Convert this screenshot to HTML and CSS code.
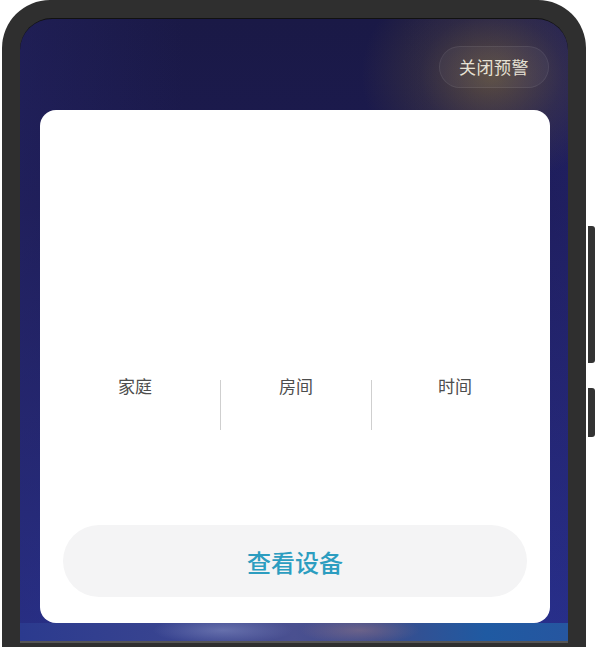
FILE: index.html
```html
<!DOCTYPE html>
<html lang="zh-CN">
<head>
<meta charset="utf-8">
<title>关闭预警</title>
<link rel="stylesheet" href="styles.css">
</head>
<body>
<div class="device">
  <div class="phone">
    <div class="screen">
      <div class="topbar">
        <div class="pill">关闭预警</div>
      </div>
      <div class="card">
        <div class="blank"></div>
        <div class="info">
          <div class="col col-a"><span class="label">家庭</span></div>
          <div class="divider"></div>
          <div class="col col-b"><span class="label">房间</span></div>
          <div class="divider"></div>
          <div class="col col-c"><span class="label">时间</span></div>
        </div>
        <div class="btn">查看设备</div>
      </div>
      <div class="glow-strip"></div>
    </div>
  </div>
  <div class="side-keys">
    <div class="key key-long"></div>
    <div class="key key-short"></div>
  </div>
</div>
</body>
</html>
```

FILE: styles.css
```css
html, body {
  margin: 0;
  padding: 0;
  background: #ffffff;
  overflow: hidden;
}
body {
  width: 598px;
  height: 647px;
  font-family: "Noto Sans CJK SC", "Noto Sans", sans-serif;
}
.device {
  display: flex;
  align-items: flex-start;
  padding-left: 2px;
}
.phone {
  width: 584px;
  height: 680px;
  box-sizing: border-box;
  background: #2f2f2f;
  border-radius: 48px 48px 0 0;
  padding: 18px 18px 0 18px;
  flex: none;
}
.screen {
  height: 625px;
  border-radius: 32px 32px 0 0;
  box-sizing: border-box;
  padding: 27px 18px 0 20px;
  display: flex;
  flex-direction: column;
  background:
    radial-gradient(ellipse 130px 110px at 86% 9%, rgba(150, 122, 45, 0.5), rgba(115, 95, 45, 0.22) 55%, transparent 100%),
    linear-gradient(90deg, rgba(40, 40, 110, 0.35) 0%, transparent 30%, transparent 70%, rgba(40, 40, 130, 0.3) 100%),
    linear-gradient(180deg, #1a1946 0%, #1c1b52 30%, #232670 65%, #283290 100%);
  border-top: 1px solid #111;
}
.topbar {
  display: flex;
  justify-content: flex-end;
  height: 42px;
  padding-right: 1px;
  flex: none;
}
.pill {
  height: 40px;
  padding: 0 19px;
  border-radius: 21px;
  border: 1px solid rgba(255, 255, 255, 0.07);
  background: rgba(255, 255, 255, 0.04);
  color: #e6e1d4;
  font-size: 17px;
  line-height: 40px;
  letter-spacing: 0.5px;
}
.card {
  margin-top: 22px;
  height: 513px;
  flex: none;
  background: #ffffff;
  border-radius: 16px;
  box-sizing: border-box;
  padding: 0 23px 26px 23px;
  display: flex;
  flex-direction: column;
}
.blank {
  height: 266px;
  flex: none;
}
.info {
  display: flex;
  height: 54px;
  margin: 0 -12px 0 -13px;
  flex: none;
}
.col {
  display: flex;
  justify-content: center;
  flex: none;
}
.col-a { width: 170px; }
.col-b { width: 150px; }
.col-c { width: 166px; }
.label {
  font-size: 17px;
  line-height: 20px;
  color: #4d4d4d;
}
.divider {
  width: 1px;
  height: 50px;
  margin-top: 4px;
  background: #cfcfcf;
  flex: none;
}
.btn {
  margin-top: auto;
  height: 72px;
  flex: none;
  border-radius: 36px;
  background: #f4f4f5;
  color: #2c9dc0;
  font-size: 24px;
  font-weight: 500;
  line-height: 74px;
  text-align: center;
}
.glow-strip {
  height: 20px;
  flex: none;
  margin: 0 -18px 0 -20px;
  background:
    radial-gradient(ellipse 70px 14px at 37% 40%, rgba(140, 150, 200, 0.5), transparent),
    radial-gradient(ellipse 60px 14px at 62% 40%, rgba(160, 125, 135, 0.45), transparent),
    linear-gradient(90deg, #2b3a8e 0%, #3a4590 30%, #4a5090 50%, #3d4b8a 65%, #1f5aa2 85%, #2656a0 100%);
  border-bottom: 2px solid #555;
  box-sizing: border-box;
}
.side-keys {
  display: flex;
  flex-direction: column;
  padding-top: 226px;
  margin-left: 2px;
}
.key {
  width: 7px;
  background: #333333;
  border-radius: 0 3px 3px 0;
}
.key-long { height: 137px; }
.key-short { height: 49px; margin-top: 25px; }
```
